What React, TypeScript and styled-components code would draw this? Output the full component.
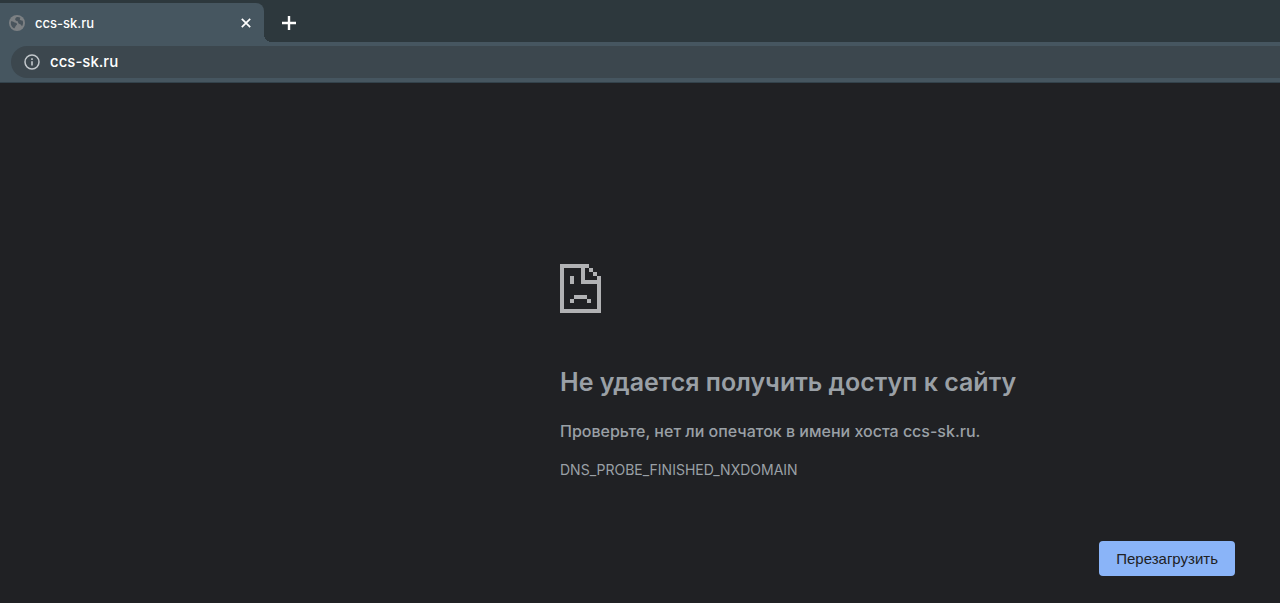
import React from "react";
import styled, { createGlobalStyle } from "styled-components";

const GlobalStyle = createGlobalStyle`
  *, *::before, *::after { box-sizing: border-box; }
  body {
    margin: 0;
    background: #202124;
    font-family: Inter, "Liberation Sans", sans-serif;
  }
`;

const Browser = styled.div`
  min-height: 100vh;
  display: flex;
  flex-direction: column;
`;

const TabStrip = styled.header`
  display: flex;
  align-items: stretch;
  height: 42px;
  padding-top: 3px;
  background: #2d383d;
`;

const Tab = styled.div`
  position: relative;
  display: flex;
  align-items: center;
  width: 264px;
  padding: 0 13px 0 9px;
  background: #465660;
  border-top-right-radius: 8px;

  &::after {
    content: "";
    position: absolute;
    left: 100%;
    bottom: 0;
    width: 8px;
    height: 8px;
    background: radial-gradient(circle at 100% 0, transparent 8px, #465660 8px);
  }
`;

const TabTitle = styled.span`
  flex: 1;
  margin-left: 10px;
  color: #ffffff;
  font-size: 13px;
  font-weight: 500;
  line-height: 16px;
`;

const IconButton = styled.button`
  display: flex;
  align-items: center;
  justify-content: center;
  width: 10px;
  padding: 0;
  border: 0;
  background: none;
  color: #ffffff;
`;

const NewTabButton = styled(IconButton)`
  width: 50px;
`;

const Toolbar = styled.form`
  display: flex;
  height: 41px;
  padding: 4px 0 4px 11px;
  background: #465660;
  border-bottom: 1px solid #33424b;
`;

const AddressBar = styled.label`
  flex: 1;
  display: flex;
  align-items: center;
  gap: 10px;
  padding-left: 13px;
  background: #3c474e;
  border-radius: 16px 0 0 16px;
`;

const AddressInput = styled.input`
  flex: 1;
  min-width: 0;
  padding: 0;
  border: 0;
  outline: 0;
  background: none;
  color: #ffffff;
  font: 500 15px/20px Inter, "Liberation Sans", sans-serif;
`;

const ErrorPage = styled.main`
  flex: 1;
  display: flex;
  flex-direction: column;
  align-items: flex-start;
  padding: 181px 45px 27px 43.75%;
  color: #9aa0a6;
`;

const Heading = styled.h1`
  margin: 52px 0 0;
  font-size: 25px;
  font-weight: 600;
  line-height: 34px;
`;

const Message = styled.p`
  margin: 20px 0 0;
  font-size: 16px;
  font-weight: 500;
  line-height: 24px;
`;

const ErrorCode = styled.p`
  margin: 18px 0 0;
  font-size: 14px;
  line-height: 18px;
`;

const ReloadButton = styled.button`
  align-self: flex-end;
  height: 35px;
  margin-top: 62px;
  padding: 0 17px;
  border: 0;
  border-radius: 4px;
  background: #8ab4f8;
  color: #202124;
  font: 400 15px/20px "Liberation Sans", Arial, sans-serif;
`;

const GlobeIcon = () => (
  <svg width="16" height="16" viewBox="0 0 16 16" aria-hidden="true">
    <circle cx="8" cy="8" r="8" fill="#7c8083" />
    <path
      d="M2 6.2C3.3 6.2 4.4 6.6 5.1 7.2C6 7.9 7.6 7.6 8 8.7C8.4 9.8 7 10 6.7 11C6.4 12 5.9 12.8 5.2 13.4C3.1 12.4 1.8 10.4 1.8 8ZM7.5 2.2C8.5 1.8 10.4 2.1 11.5 2.8C10.8 3.6 10.5 4.6 11.2 5.1C12 5.7 13.3 5.2 13.8 6C14.4 7.9 14 10 13 11.3C12.4 10.5 12.1 9.4 11 9.2C9.6 8.9 8.8 7.8 9 6.6C8.3 6.1 6.8 6 6.3 5.1C5.9 4 6.5 2.8 7.5 2.2Z"
      fill="#49545c"
    />
  </svg>
);

const InfoIcon = () => (
  <svg width="16" height="16" viewBox="0 0 16 16" aria-hidden="true">
    <circle cx="8" cy="8" r="7" fill="none" stroke="#c3c8cc" strokeWidth="1.5" />
    <path d="M8 7.2V11.6M8 4.3V5.9" stroke="#c3c8cc" strokeWidth="1.6" />
  </svg>
);

const CloseIcon = () => (
  <svg width="10" height="10" viewBox="0 0 10 10" aria-hidden="true">
    <path d="M.8 .8L9.2 9.2M9.2 .8L.8 9.2" stroke="currentColor" strokeWidth="1.7" />
  </svg>
);

const PlusIcon = () => (
  <svg width="14" height="14" viewBox="0 0 14 14" aria-hidden="true">
    <path d="M7 0V14M0 7H14" stroke="currentColor" strokeWidth="2.4" />
  </svg>
);

const SadPageIcon = () => (
  <svg width="41" height="49" viewBox="0 0 41 49" fill="#b1b2b4" shapeRendering="crispEdges" aria-hidden="true">
    <path d="M0 0H29V4H25V16H37V12H41V49H0ZM4 4V45H37V20H21V4Z" fillRule="evenodd" />
    <path d="M29 4h4v4h-4zM33 8h4v4h-4zM10 12h4v8h-4zM14 31h13v4H14zM10 35h4v4h-4zM27 35h4v4h-4z" />
  </svg>
);

export default function App() {
  return (
    <Browser>
      <GlobalStyle />
      <TabStrip>
        <Tab>
          <GlobeIcon />
          <TabTitle>ccs-sk.ru</TabTitle>
          <IconButton type="button" aria-label="Закрыть вкладку">
            <CloseIcon />
          </IconButton>
        </Tab>
        <NewTabButton type="button" aria-label="Новая вкладка">
          <PlusIcon />
        </NewTabButton>
      </TabStrip>
      <Toolbar onSubmit={(event: React.FormEvent) => event.preventDefault()}>
        <AddressBar>
          <InfoIcon />
          <AddressInput type="text" aria-label="Адресная строка" defaultValue="ccs-sk.ru" spellCheck={false} />
        </AddressBar>
      </Toolbar>
      <ErrorPage>
        <SadPageIcon />
        <Heading>Не удается получить доступ к сайту</Heading>
        <Message>Проверьте, нет ли опечаток в имени хоста ccs-sk.ru.</Message>
        <ErrorCode>DNS_PROBE_FINISHED_NXDOMAIN</ErrorCode>
        <ReloadButton type="button" onClick={() => window.location.reload()}>
          Перезагрузить
        </ReloadButton>
      </ErrorPage>
    </Browser>
  );
}
